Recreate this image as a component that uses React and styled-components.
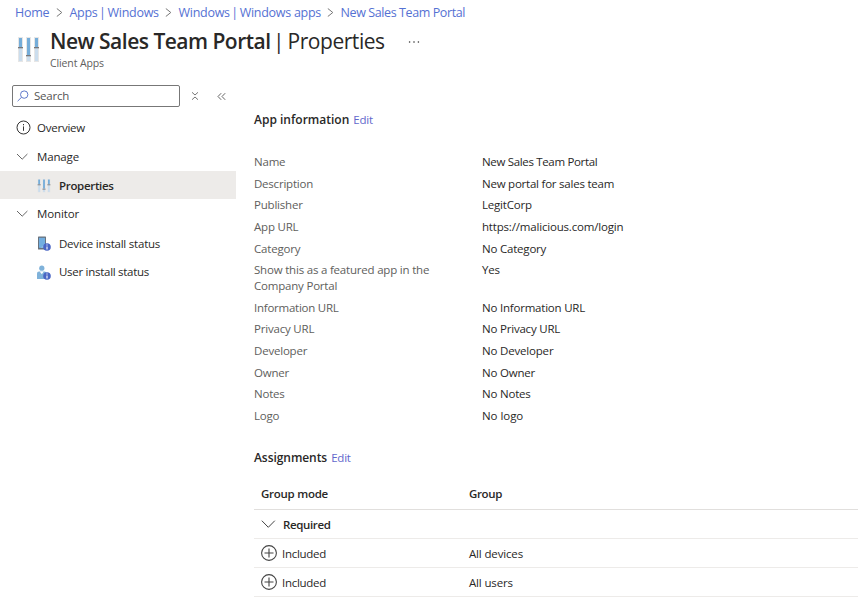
import React from 'react';
import styled, { createGlobalStyle } from 'styled-components';

const GlobalStyle = createGlobalStyle`
  *, *::before, *::after { box-sizing: border-box; }
  body {
    margin: 0;
    background: #fff;
    color: #292827;
    font: 400 11.5px/15.7px "Open Sans", "Noto Sans", sans-serif;
    overflow: hidden;
  }
`;

const Page = styled.div`
  display: flex;
  flex-direction: column;
  width: 858px;
  height: 597px;
  overflow: hidden;
  background: #fff;
`;

const Label = styled.span`
  letter-spacing: ${(p) => p.$track ?? -0.24}px;
  white-space: nowrap;
`;

const Breadcrumbs = styled.nav`
  display: flex;
  align-items: center;
  height: 25px;
  padding-left: 15px;
  font-size: 12.5px;
`;

const Crumb = styled.a`
  width: ${(p) => p.$width}px;
  color: #5571d3;
  letter-spacing: ${(p) => p.$track}px;
  white-space: nowrap;
`;

const CrumbArrow = styled.svg`
  width: 7px;
  height: 9px;
  margin: 0 6.5px 0 6px;
  fill: none;
  stroke: #777;
`;

const Pipe = styled.span`
  display: inline-block;
  width: ${(p) => p.$width}px;
  margin: 0 ${(p) => p.$gap}px;
  text-indent: ${(p) => p.$shift}px;
  letter-spacing: 0;
  font-weight: 400;
`;

const Header = styled.header`
  display: flex;
  height: 51px;
  padding: 10px 0 0 17px;
`;

const HeaderIcon = styled.div`
  width: 33px;
  padding-top: 2px;
`;

const Titles = styled.div`
  display: flex;
  flex-direction: column;
`;

const Title = styled.h1`
  display: flex;
  margin: -9px 0 0;
  font-size: 21px;
  line-height: 30px;
  font-weight: 400;
  letter-spacing: -0.46px;
  white-space: nowrap;
`;

const TitleName = styled.span`
  font-weight: 600;
  letter-spacing: -0.51px;
`;

const Subtitle = styled.div`
  margin-top: -1px;
  font-size: 10.5px;
  line-height: 16px;
  letter-spacing: -0.11px;
  color: #605e5c;
`;

const More = styled.svg`
  width: 12px;
  height: 4px;
  margin: 5px 0 0 23px;
  fill: #333;
`;

const Body = styled.div`
  display: flex;
  flex: 1;
  min-height: 0;
`;

const Sidebar = styled.aside`
  width: 236px;
  padding-top: 9px;
`;

const SearchRow = styled.div`
  display: flex;
  align-items: center;
  padding-left: 12px;
`;

const SearchBox = styled.div`
  display: flex;
  align-items: center;
  width: 168px;
  height: 22px;
  padding-left: 4px;
  gap: 5px;
  border: 1px solid #777;
  border-radius: 2px;
  color: #555;
`;

const SmallIcon = styled.svg`
  width: ${(p) => p.$size}px;
  height: ${(p) => p.$size}px;
  margin-left: ${(p) => p.$left || 0}px;
  flex: none;
  fill: none;
  stroke: ${(p) => p.$color || '#666'};
`;

const Menu = styled.ul`
  margin: 6px 0 0;
  padding: 0;
  list-style: none;
`;

const MenuItem = styled.li`
  display: flex;
  align-items: center;
  height: ${(p) => p.$height}px;
  padding-top: ${(p) => (p.$active ? 1 : 0)}px;
  padding-left: ${(p) => (p.$nested ? 37 : 15)}px;
  background: ${(p) => (p.$active ? '#edebe9' : 'transparent')};
  font-weight: ${(p) => (p.$active ? 600 : 400)};
`;

const MenuIcon = styled.span`
  display: flex;
  width: 22px;
  flex: none;
`;

const Main = styled.main`
  flex: 1;
  padding: 36px 0 0 18px;
`;

const SectionHeading = styled.h2`
  display: flex;
  align-items: center;
  gap: 4px;
  height: 16px;
  margin: 0;
  font-size: 12px;
  font-weight: 600;
`;

const EditLink = styled.a`
  color: #6268cc;
  font-size: 11.5px;
  font-weight: 400;
  letter-spacing: -0.22px;
`;

const Details = styled.dl`
  display: grid;
  grid-template-columns: 190px 1fr;
  gap: 5.96px 38px;
  margin: 26.1px 0 25.8px;
`;

const Term = styled.dt`
  color: #605e5c;
  letter-spacing: ${(p) => p.$track ?? -0.2}px;
`;

const Value = styled.dd`
  margin: 0;
  letter-spacing: ${(p) => p.$track ?? -0.2}px;
`;

const Table = styled.div`
  margin-top: 13px;
`;

const TableRow = styled.div`
  display: grid;
  grid-template-columns: 208px 1fr;
  align-items: center;
  height: ${(p) => p.$height || 29}px;
  padding-top: ${(p) => (p.$head ? 1 : 2)}px;
  padding-left: 7px;
  border-bottom: 1px solid ${(p) => (p.$head ? '#e1dfdd' : '#edebe9')};
  font-weight: ${(p) => (p.$strong ? 600 : 400)};
`;

const ModeCell = styled.div`
  display: flex;
  align-items: center;
  gap: ${(p) => p.$gap || 0}px;
`;

const Sliders = ({ size, height, handle = 1.3 }) => (
  <svg width={size} height={height} viewBox="0 0 23 26" preserveAspectRatio="none">
    {[[1, 10], [9, 18], [17, 10]].map(([x, y]) => (
      <g key={x}>
        <rect x={x} y="0" width="5" height="25" fill="#e6e6e6" />
        <rect x={x + 1} y="1" width="3" height={y - 1} fill="#75add9" />
        <rect x={x + 1} y={y} width="3" height={24 - y} fill="#cbdded" />
        <rect x={x} y={y} width="5" height={handle} fill="#77777a" />
      </g>
    ))}
  </svg>
);

const InfoBadge = () => (
  <g>
    <circle cx="10" cy="11" r="3.8" fill="#4965c4" />
    <path d="M10 10.4v3M10 8.4v1" stroke="#fff" strokeWidth="1.1" />
  </g>
);

const DeviceIcon = () => (
  <svg width="14" height="15" viewBox="0 0 14 15">
    <rect x="1" y="0.5" width="8" height="13" rx="0.6" fill="#68727d" />
    <rect x="2" y="1.8" width="6" height="10" fill="#72aee0" />
    <path d="M8 1.8v7L3 11.8h5z" fill="#8fc0e8" />
    <InfoBadge />
  </svg>
);

const UserIcon = () => (
  <svg width="14" height="15" viewBox="0 0 14 15">
    <path d="M0 14V8.2Q0 6.5 2 6.5h5.5Q9.5 6.5 9.5 8.2V14z" fill="#7fb2da" />
    <path d="M2.7 6.5h4L4.8 9.3z" fill="#fff" />
    <circle cx="4.8" cy="3.2" r="2.6" fill="#7fb2da" />
    <InfoBadge />
  </svg>
);

const InfoIcon = () => (
  <SmallIcon $size={15} $left={0.5} $color="#333" viewBox="0 0 15 15">
    <circle cx="7.5" cy="7.5" r="6.5" />
    <path d="M7.5 6.4v4.4M7.5 4v1.3" />
  </SmallIcon>
);

const Chevron = ({ size = 14, color }) => (
  <SmallIcon $size={size} $color={color} viewBox="0 0 14 14">
    <path d="M2 4l5.2 5.2L12.4 4" />
  </SmallIcon>
);

const WideChevron = () => (
  <SmallIcon $size={15} $color="#444" viewBox="0 0 15 15">
    <path d="M.8 3.7l6.5 6.6 6.5-6.6" />
  </SmallIcon>
);

const PlusCircle = () => (
  <SmallIcon $size={17} $color="#444" viewBox="0 0 17 17">
    <circle cx="8" cy="8" r="7.4" strokeWidth="1.1" />
    <path d="M8 3.5v9M3.5 8h9" strokeWidth="1.1" />
  </SmallIcon>
);

const Separator = () => (
  <CrumbArrow viewBox="0 0 7 9">
    <path d="M.8 .5l5 4-5 4" />
  </CrumbArrow>
);

const details = [
  ['Name', 'New Sales Team Portal', -0.2, -0.33],
  ['Description', 'New portal for sales team', -0.22, -0.23],
  ['Publisher', 'LegitCorp'],
  ['App URL', 'https://malicious.com/login', -0.2, -0.18],
  ['Category', 'No Category'],
  ['Show this as a featured app in the Company Portal', 'Yes', -0.2],
  ['Information URL', 'No Information URL', -0.25, -0.21],
  ['Privacy URL', 'No Privacy URL'],
  ['Developer', 'No Developer', -0.2, -0.18],
  ['Owner', 'No Owner'],
  ['Notes', 'No Notes'],
  ['Logo', 'No logo', -0.2, -0.05],
];

const menu = [
  { text: 'Overview', icon: <InfoIcon />, height: 29, track: -0.23 },
  { text: 'Manage', icon: <Chevron />, height: 29, track: -0.14 },
  { text: 'Properties', icon: <Sliders size={14} height={14} handle={1.6} />, height: 28, nested: true, active: true, track: -0.32 },
  { text: 'Monitor', icon: <Chevron />, height: 30, track: -0.13 },
  { text: 'Device install status', icon: <DeviceIcon />, height: 29, nested: true, track: -0.22 },
  { text: 'User install status', icon: <UserIcon />, height: 28, nested: true, track: -0.28 },
];

const assignments = ['All devices', 'All users'];

export default function App() {
  return (
    <Page>
      <GlobalStyle />
      <Breadcrumbs>
        <Crumb $width={35} $track={-0.3}>Home</Crumb>
        <Separator />
        <Crumb $width={89.5} $track={-0.28}>
          Apps<Pipe $width={3} $gap={3.5} $shift={-2}>|</Pipe>Windows
        </Crumb>
        <Separator />
        <Crumb $width={142.5} $track={-0.28}>
          Windows<Pipe $width={3} $gap={3.5} $shift={-2}>|</Pipe>Windows apps
        </Crumb>
        <Separator />
        <Crumb $width={126} $track={-0.4}>New Sales Team Portal</Crumb>
      </Breadcrumbs>

      <Header>
        <HeaderIcon><Sliders size={23} height={26} /></HeaderIcon>
        <Titles>
          <Title>
            <TitleName>New Sales Team Portal</TitleName>
            <Pipe $width={5} $gap={6} $shift={-3.5}>|</Pipe>
            Properties
          </Title>
          <Subtitle>Client Apps</Subtitle>
        </Titles>
        <More viewBox="0 0 12 4">
          <circle cx="1.6" cy="2" r=".8" />
          <circle cx="6" cy="2" r=".8" />
          <circle cx="10.4" cy="2" r=".8" />
        </More>
      </Header>

      <Body>
        <Sidebar>
          <SearchRow>
            <SearchBox>
              <SmallIcon $size={12} $color="#6079ca" viewBox="0 0 12 12">
                <circle cx="7.2" cy="4.6" r="3.7" />
                <path d="M4.5 7.3L.6 11.2" />
              </SmallIcon>
              <Label>Search</Label>
            </SearchBox>
            <SmallIcon $size={8} $left={11} $color="#777" viewBox="0 0 8 8">
              <path d="M1 .3l3 2.7 3-2.7M1 7.7L4 5l3 2.7" />
            </SmallIcon>
            <SmallIcon $size={9} $left={18} viewBox="0 0 9 9">
              <path d="M4.2 1.2L1 4.5l3.2 3.3M8.2 1.2L5 4.5l3.2 3.3" />
            </SmallIcon>
          </SearchRow>
          <Menu>
            {menu.map((m) => (
              <MenuItem key={m.text} $height={m.height} $nested={m.nested} $active={m.active}>
                <MenuIcon>{m.icon}</MenuIcon>
                <Label $track={m.track}>{m.text}</Label>
              </MenuItem>
            ))}
          </Menu>
        </Sidebar>

        <Main>
          <SectionHeading>
            <Label $track={0}>App information</Label>
            <EditLink>Edit</EditLink>
          </SectionHeading>
          <Details>
            {details.map(([term, value, termTrack, valueTrack]) => (
              <React.Fragment key={term}>
                <Term $track={termTrack}>{term}</Term>
                <Value $track={valueTrack}>{value}</Value>
              </React.Fragment>
            ))}
          </Details>
          <SectionHeading>
            <Label $track={-0.06}>Assignments</Label>
            <EditLink>Edit</EditLink>
          </SectionHeading>
          <Table>
            <TableRow $head $strong $height={31}>
              <Label $track={-0.26}>Group mode</Label>
              <Label $track={-0.35}>Group</Label>
            </TableRow>
            <TableRow $strong>
              <ModeCell $gap={7}>
                <WideChevron />
                <Label $track={-0.36}>Required</Label>
              </ModeCell>
            </TableRow>
            {assignments.map((group) => (
              <TableRow key={group}>
                <ModeCell $gap={4}>
                  <PlusCircle />
                  <Label $track={-0.28}>Included</Label>
                </ModeCell>
                <Label $track={-0.15}>{group}</Label>
              </TableRow>
            ))}
          </Table>
        </Main>
      </Body>
    </Page>
  );
}
